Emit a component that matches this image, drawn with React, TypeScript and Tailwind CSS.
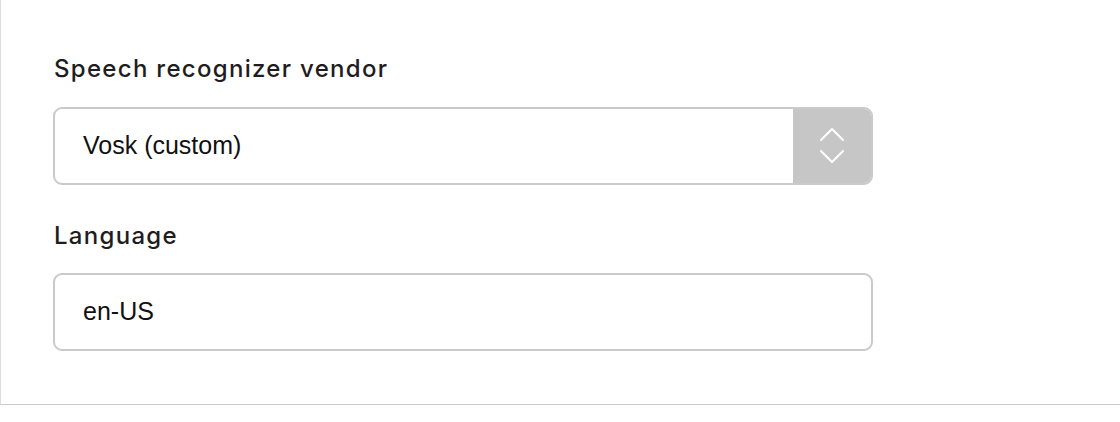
export default function App() {
    const fields = [
        { label: 'Speech recognizer vendor', value: 'Vosk (custom)', select: true },
        { label: 'Language', value: 'en-US', select: false },
    ];

    return (
        <div className="h-[422px] w-[1120px] bg-white">
            <div className="h-[405px] border-l border-b border-l-[#dddddd] border-b-[#cccccc] pl-[52px] pt-[51px]">
                <div className="flex w-[820px] flex-col">
                    {fields.map((field, i) => (
                        <div key={field.label} className={i > 0 ? 'mt-[33px]' : ''}>
                            {/* Label */}
                            <label className="block pl-px font-['Inter',sans-serif] text-[24px] leading-[36px] font-medium tracking-[1.3px] text-[#1f1d1e]">
                                {field.label}
                            </label>

                            {/* Control */}
                            <div className={`${i > 0 ? 'mt-[19px]' : 'mt-[20px]'} flex h-[78px] overflow-hidden rounded-[9px] border-2 border-[#cacaca] bg-white`}>
                                <div className="flex flex-1 items-center pl-[28px] font-['Liberation_Sans',Arial,sans-serif] text-[25px] text-[#111]">
                                    {field.value}
                                </div>
                                {field.select && (
                                    <div className="flex w-[78px] items-center justify-center bg-[#c6c6c6]">
                                        <svg width="24" height="38" viewBox="0 0 24 38" fill="none" stroke="white" strokeWidth="2" strokeLinecap="round" strokeLinejoin="round">
                                            <path d="M1 13 L12 2 L23 13" />
                                            <path d="M1 24 L12 35 L23 24" />
                                        </svg>
                                    </div>
                                )}
                            </div>
                        </div>
                    ))}
                </div>
            </div>
        </div>
    );
}
